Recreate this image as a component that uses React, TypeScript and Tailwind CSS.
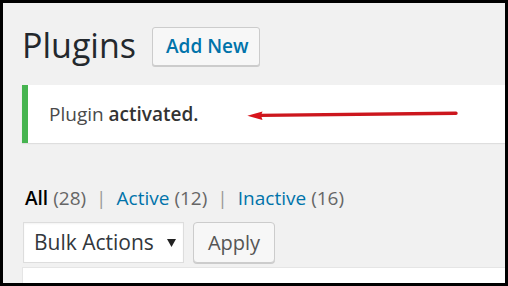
import * as React from "react";

const FILTERS = [
  { label: "All", count: 28, current: true },
  { label: "Active", count: 12, current: false },
  { label: "Inactive", count: 16, current: false },
] as const;

function Arrow() {
  return (
    <svg
      className="absolute left-[216px] top-[22px]"
      width="216"
      height="16"
      viewBox="0 0 216 16"
      aria-hidden
    >
      <path d="M16 8.4 L212 6.3" stroke="#cc161d" strokeWidth="3.4" strokeLinecap="round" />
      <path d="M3.3 8.7 L18.5 4.6 L17 8.5 L18.5 13 Z" fill="#d8141c" />
    </svg>
  );
}

export default function App() {
  return (
    <div
      className="box-border h-[286px] w-[508px] overflow-hidden border-[3px] border-black bg-[#f1f1f1] pl-[19px]"
      style={{ fontFamily: '"Open Sans", "Noto Sans", sans-serif' }}
    >
      <div className="mt-[24px] flex items-start gap-[16px]">
        <h1 className="text-[34px] font-normal leading-[36px] text-[#23282d]">Plugins</h1>
        <button
          type="button"
          className="flex h-[39px] items-center rounded-[3px] border border-[#cccccc] bg-[#f7f7f7] pl-[13px] pr-[11px] text-[19px] font-semibold leading-none text-[#0073aa] shadow-[0_1px_0_#cccccc]"
        >
          Add New
        </button>
      </div>

      <div className="relative mt-[19px] flex h-[58px] items-center border-l-[6px] border-[#46b450] bg-white pl-[21px] shadow-[0_1px_1px_rgba(0,0,0,0.08)]">
        <p className="text-[19px] leading-none text-[#4a4a4a]">
          Plugin <strong className="font-semibold text-[#333333]">activated.</strong>
        </p>
        <Arrow />
      </div>

      <ul className="ml-[3px] mt-[43px] flex items-center text-[19px] leading-[24px]">
        {FILTERS.map((f, i) => (
          <li key={f.label} className="flex items-center">
            {f.current ? (
              <span className="font-semibold text-black">{f.label}</span>
            ) : (
              <a href="#" className="text-[#0073aa]">
                {f.label}
              </a>
            )}
            <span className="ml-[5px] text-[#666666]">({f.count})</span>
            {i < FILTERS.length - 1 ? (
              <span className="mx-[10px] text-[#999999]">|</span>
            ) : null}
          </li>
        ))}
      </ul>

      <div className="ml-[1px] mt-[12px] flex items-start gap-[9px]">
        <div className="flex h-[41px] w-[161px] items-center border border-[#dddddd] bg-white pl-[10px] shadow-[inset_0_1px_2px_rgba(0,0,0,0.05)]">
          <span className="text-[21px] leading-none text-[#32373c]">Bulk Actions</span>
          <svg className="ml-[13px]" width="9" height="8" viewBox="0 0 9 8" aria-hidden>
            <path d="M0 0 H9 L4.5 8 Z" fill="#222222" />
          </svg>
        </div>
        <button
          type="button"
          className="flex h-[41px] w-[82px] items-center justify-center rounded-[4px] border border-[#cccccc] bg-[#f7f7f7] text-[20px] leading-none text-[#555555] shadow-[0_1px_0_#cccccc]"
        >
          Apply
        </button>
      </div>

      <div className="mt-[4px] h-[40px] border-l border-t border-[#e5e5e5] bg-white" />
    </div>
  );
}
